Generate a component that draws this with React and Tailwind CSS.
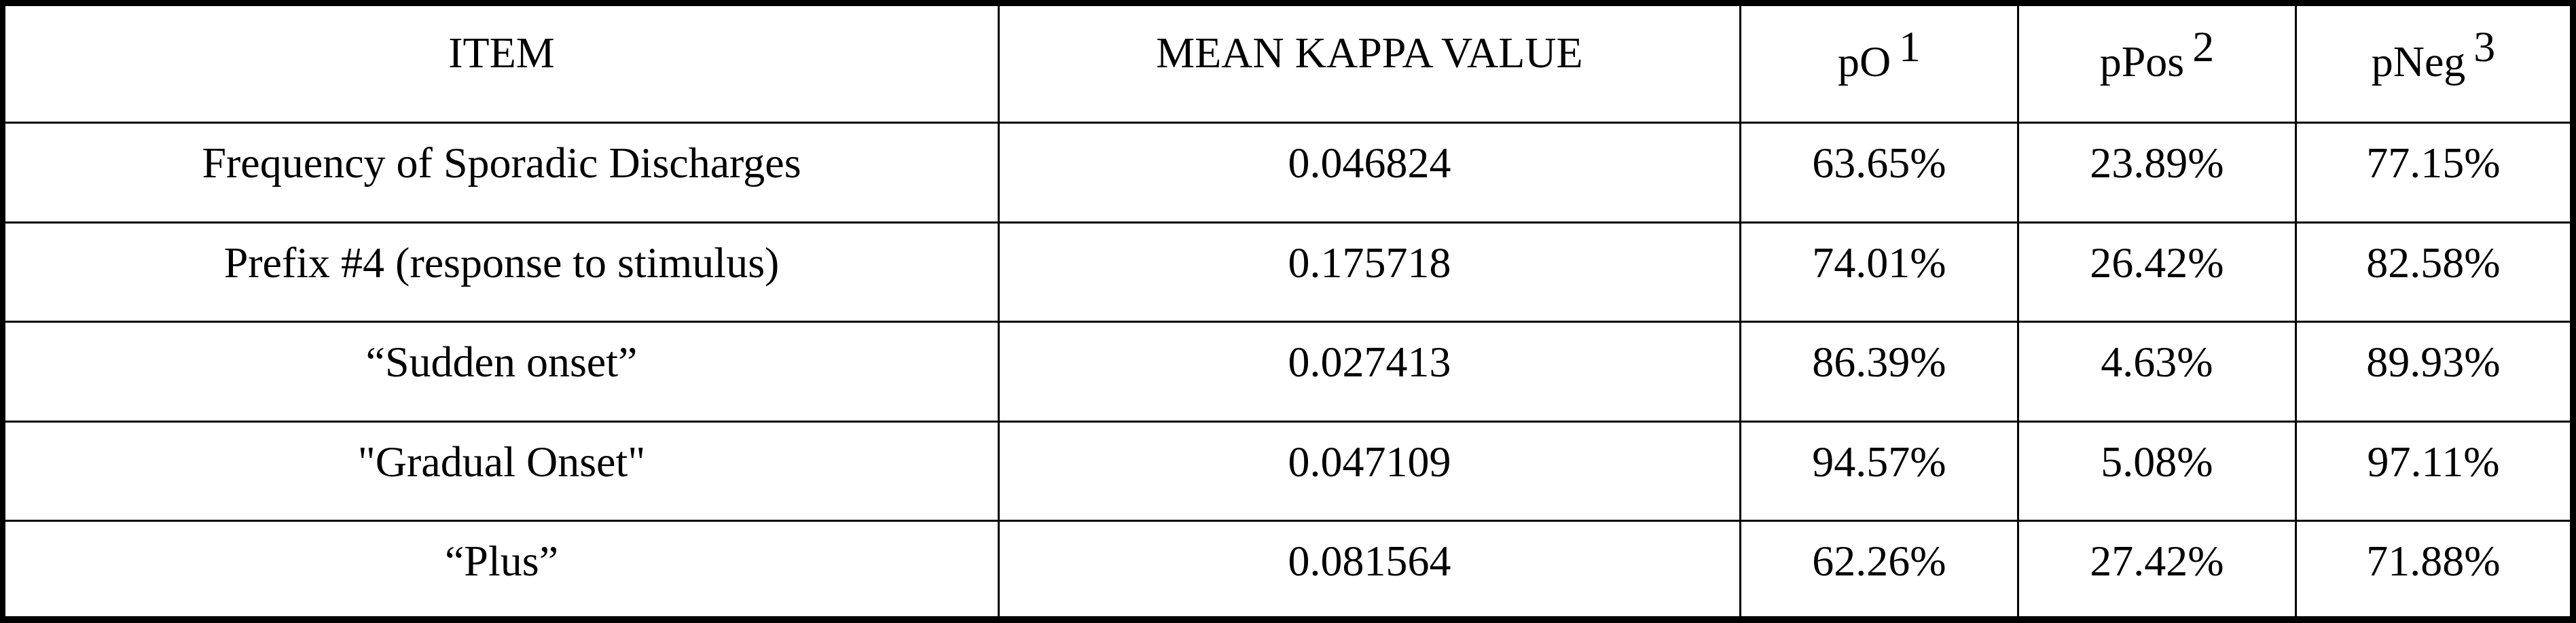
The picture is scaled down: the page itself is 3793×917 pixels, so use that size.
import React from 'react';

const rows = [
    { item: 'Frequency of Sporadic Discharges', kappa: '0.046824', po: '63.65%', pos: '23.89%', neg: '77.15%' },
    { item: 'Prefix #4 (response to stimulus)', kappa: '0.175718', po: '74.01%', pos: '26.42%', neg: '82.58%' },
    { item: '\u201CSudden onset\u201D', kappa: '0.027413', po: '86.39%', pos: '4.63%', neg: '89.93%' },
    { item: '"Gradual Onset"', kappa: '0.047109', po: '94.57%', pos: '5.08%', neg: '97.11%' },
    { item: '\u201CPlus\u201D', kappa: '0.081564', po: '62.26%', pos: '27.42%', neg: '71.88%' },
];

const rowHeights = ['h-[147px]', 'h-[146px]', 'h-[147px]', 'h-[146px]', 'h-[139px]'];

const Sup = ({ children }) => (
    <span className="relative -top-[22px] ml-[12px] inline-block">{children}</span>
);

const App = () => {
    return (
        <div className="w-[3793px] h-[917px] bg-white border-black border-l-8 border-t-[9px] border-r-[9px] border-b-[10px] font-['Liberation_Serif','Times_New_Roman',serif] text-[64px] leading-[64px] text-black">
            <div className="grid grid-cols-[1464px_1092px_409px_409px_402px]">
                {/* Header */}
                <div className="h-[173px] border-r-[3px] border-b-[3px] border-black text-center pt-[37px]">ITEM</div>
                <div className="h-[173px] border-r-[3px] border-b-[3px] border-black text-center pt-[37px]">MEAN KAPPA VALUE</div>
                <div className="h-[173px] border-r-[3px] border-b-[3px] border-black text-center pt-[50px]">
                    pO<Sup>1</Sup>
                </div>
                <div className="h-[173px] border-r-[3px] border-b-[3px] border-black text-center pt-[50px]">
                    pPos<Sup>2</Sup>
                </div>
                <div className="h-[173px] border-b-[3px] border-black text-center pt-[50px]">
                    pNeg<Sup>3</Sup>
                </div>

                {/* Body */}
                {rows.map((row, i) => {
                    const last = i === rows.length - 1;
                    const h = rowHeights[i];
                    const b = last ? '' : 'border-b-[3px]';
                    return (
                        <React.Fragment key={row.kappa}>
                            <div className={`${h} ${b} border-r-[3px] border-black text-center pt-[26px]`}>{row.item}</div>
                            <div className={`${h} ${b} border-r-[3px] border-black text-center pt-[26px]`}>{row.kappa}</div>
                            <div className={`${h} ${b} border-r-[3px] border-black text-center pt-[26px]`}>{row.po}</div>
                            <div className={`${h} ${b} border-r-[3px] border-black text-center pt-[26px]`}>{row.pos}</div>
                            <div className={`${h} ${b} border-black text-center pt-[26px]`}>{row.neg}</div>
                        </React.Fragment>
                    );
                })}
            </div>
        </div>
    );
};

export default App;
